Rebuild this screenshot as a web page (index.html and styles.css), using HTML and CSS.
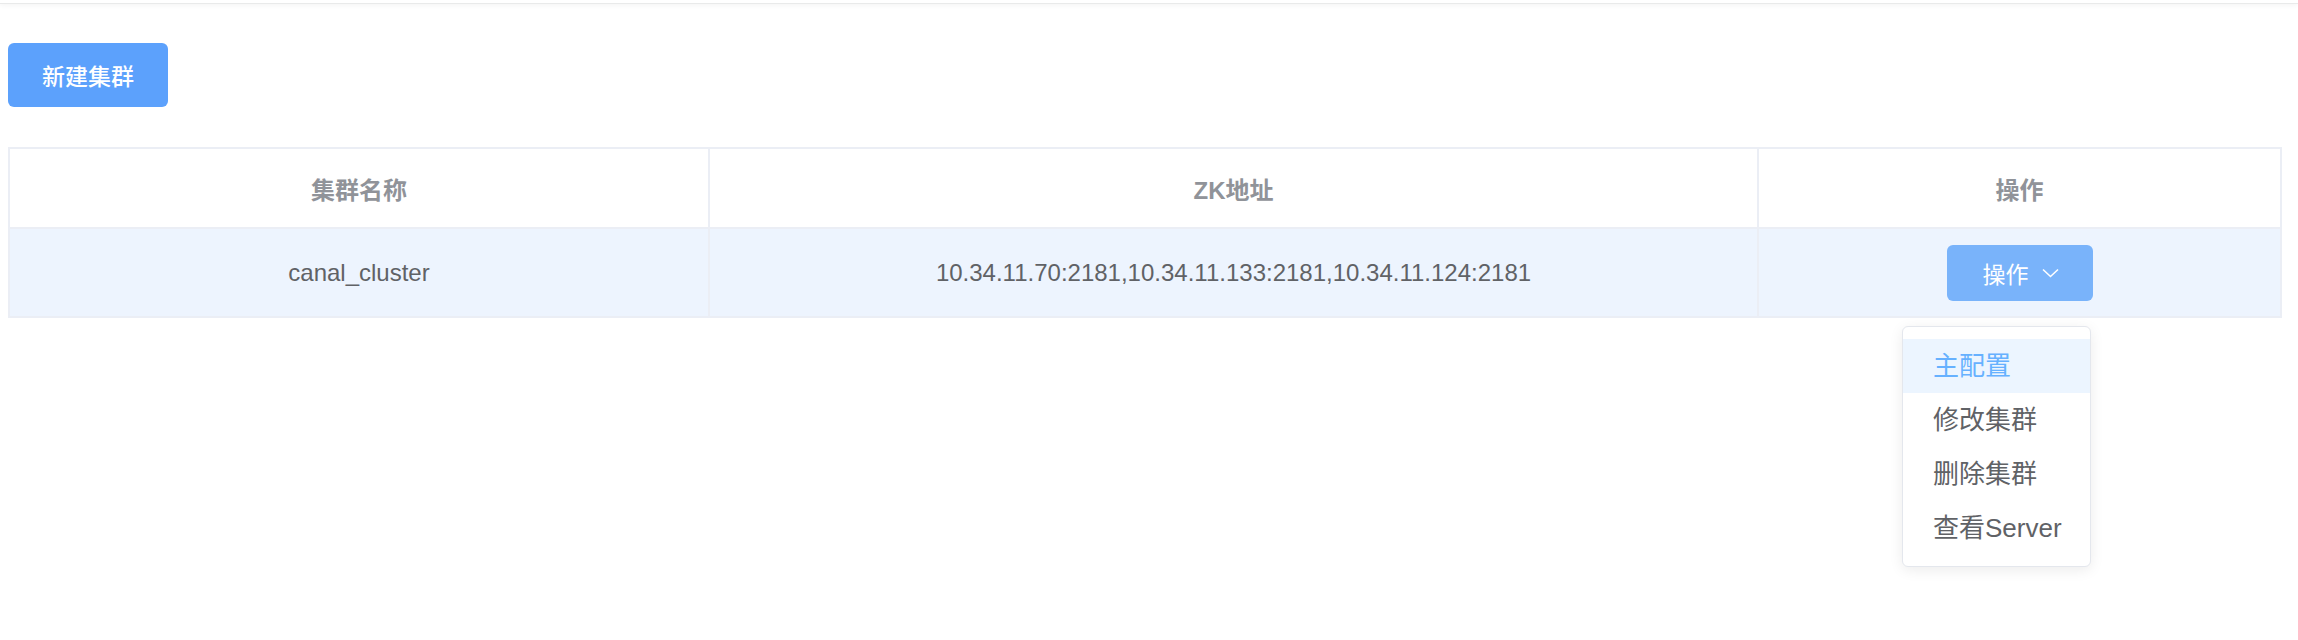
FILE: index.html
```html
<!DOCTYPE html>
<html lang="zh-CN">
<head>
<meta charset="utf-8">
<title>集群管理</title>
<link rel="stylesheet" href="styles.css">
</head>
<body>
<div class="topbar"></div>
<main class="page">
  <button class="btn-primary">新建集群</button>
  <div class="table">
    <div class="th">集群名称</div>
    <div class="th">ZK地址</div>
    <div class="th last">操作</div>
    <div class="td">canal_cluster</div>
    <div class="td">10.34.11.70:2181,10.34.11.133:2181,10.34.11.124:2181</div>
    <div class="td last">
      <div class="op-btn"><span>操作</span>
        <svg class="chev" width="17" height="10" viewBox="0 0 17 10"><polyline points="1,1.5 8.5,8.5 16,1.5" fill="none" stroke="#fff" stroke-width="1.6"></polyline></svg>
      </div>
    </div>
  </div>
  <div class="op-menu">
    <div class="menu-item active">主配置</div>
    <div class="menu-item">修改集群</div>
    <div class="menu-item">删除集群</div>
    <div class="menu-item">查看Server</div>
  </div>
</main>
</body>
</html>
```
FILE: styles.css
```css
* { box-sizing: border-box; }
html, body { margin: 0; padding: 0; background: #fff; }
body {
  font-family: "Liberation Sans", "Noto Sans CJK SC", sans-serif;
  color: #606266;
}
.topbar {
  height: 4px;
  background: #fff;
  border-bottom: 1px solid #e9eaea;
  box-shadow: 0 1px 5px rgba(0, 21, 41, 0.06);
}
.page {
  position: relative;
  min-height: 636px;
  padding: 39px 8px 0;
}
.btn-primary {
  display: block;
  width: 160px;
  height: 64px;
  margin: 0 0 40px;
  padding: 0;
  border: none;
  border-radius: 6px;
  background: #5ca1fc;
  color: #fff;
  font-family: inherit;
  font-size: 23px;
  font-weight: 500;
}
.table {
  width: 2274px;
  border: 2px solid #ebeef5;
  display: grid;
  grid-template-columns: 700px 1049px 521px;
}
.th, .td {
  display: flex;
  align-items: center;
  justify-content: center;
  border-right: 2px solid #ebeef5;
  font-size: 24px;
}
.th {
  height: 80px;
  border-bottom: 2px solid #ebeef5;
  color: #909399;
  font-weight: bold;
  background: #fff;
}
.td {
  height: 87px;
  background: #edf4fe;
  color: #606266;
}
.last { border-right: none; }
.op-btn {
  width: 146px;
  height: 56px;
  padding-left: 2px;
  border-radius: 6px;
  background: #79b3fa;
  color: #fff;
  font-size: 23px;
  display: flex;
  align-items: center;
  justify-content: center;
  gap: 13px;
}
.chev { display: block; margin-top: 1px; }
.op-menu {
  position: absolute;
  top: 322px;
  left: 1902px;
  width: 189px;
  padding: 12px 0 11px;
  background: #fff;
  border: 1px solid #e4e7ed;
  border-radius: 6px;
  box-shadow: 0 3px 14px rgba(0, 0, 0, 0.08);
  z-index: 10;
}
.menu-item {
  height: 54px;
  line-height: 54px;
  padding-left: 30px;
  font-size: 26px;
  color: #606266;
  white-space: nowrap;
}
.menu-item.active {
  background: #ecf5ff;
  color: #66b1ff;
}
```
